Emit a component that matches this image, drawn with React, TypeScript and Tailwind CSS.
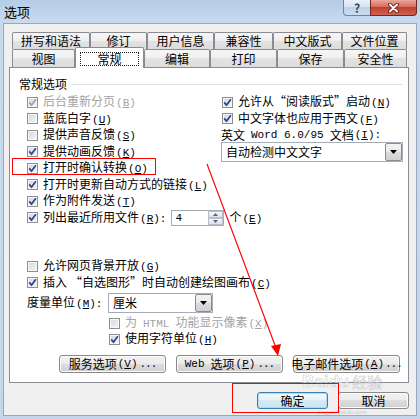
import type { ReactNode } from 'react';

const cjk = "font-['Noto_Sans_CJK_SC',sans-serif]";
const mono = "font-['Liberation_Mono',monospace] text-[11px]";
const dots = "font-['Liberation_Mono',monospace] text-[11px] tracking-[-1px]";
const btnFace = 'bg-[linear-gradient(#f2f2f2,#ebebeb_50%,#dddddd_50%,#cfcfcf)]';

// mnemonic like (B) with underlined letter, SimSun-style half width
function K({ k, colon }: { k: string; colon?: boolean }) {
  return (
    <span className={`${mono} ml-[1px]`}>
      (<span className="underline underline-offset-[1px]">{k}</span>){colon ? ':' : ''}
    </span>
  );
}

function Box({ on, off }: { on?: boolean; off?: boolean }) {
  return (
    <span className="flex h-[11px] w-[11px] shrink-0 items-center justify-center border border-[#8e8f8f] bg-[linear-gradient(135deg,#d3d7dd,#f5f5f5)] shadow-[inset_0_0_0_1px_#f7f7f7]">
      {on && (
        <svg width="9" height="9" viewBox="0 0 9 9" className="overflow-visible">
          <path d="M1.2 4.4 L3.5 7.1 L7.9 1.2" fill="none" stroke={off ? '#a2a2a2' : '#2c4690'} strokeWidth="1.7" />
        </svg>
      )}
    </span>
  );
}

function Check({ on, off, children, className = '' }: { on?: boolean; off?: boolean; children: ReactNode; className?: string }) {
  return (
    <div className={`flex h-[16.5px] items-center gap-[5px] ${className}`}>
      <Box on={on} off={off} />
      <span className={`whitespace-nowrap leading-[14px] ${off ? 'text-[#a3a3a3]' : 'text-black'}`}>{children}</span>
    </div>
  );
}

function Combo({ value, className = '' }: { value: string; className?: string }) {
  return (
    <div className={`flex h-[20px] items-center border border-[#a5acb5] bg-white pl-[4px] ${className}`}>
      <span className="flex-1 whitespace-nowrap leading-[14px]">{value}</span>
      <span className={`flex h-[18px] w-[17px] items-center justify-center rounded-[2px] border border-[#8c8c8c] ${btnFace}`}>
        <svg width="7" height="4" viewBox="0 0 7 4">
          <path d="M0 0h7L3.5 4z" fill="#000" />
        </svg>
      </span>
    </div>
  );
}

function Btn({ children, className = '', focus }: { children: ReactNode; className?: string; focus?: boolean }) {
  return (
    <div
      className={`flex items-center justify-center whitespace-nowrap rounded-[3px] border leading-[14px] ${
        focus ? 'border-[#3c7fb1] shadow-[inset_0_0_0_1px_#a9dcf6] bg-[linear-gradient(#f4f9fc,#e6f2f9_50%,#d6e9f4_50%,#cbe3f1)]' : `border-[#8a8a8a] shadow-[inset_0_0_0_1px_#fbfbfb] ${btnFace}`
      } ${className}`}
    >
      {children}
    </div>
  );
}

const tabFace = 'bg-[linear-gradient(#f6f6f6,#efefef_50%,#e3e3e3_50%,#dcdcdc)]';

function Tab({ w, label }: { w: string; label: string }) {
  return (
    <div className={`${w} flex h-full items-center justify-center rounded-t-[2px] border-x border-t border-[#898c95] ${tabFace} leading-[14px]`}>
      {label}
    </div>
  );
}

export default function App() {
  return (
    <div className={`relative h-[419px] w-[420px] overflow-hidden bg-[linear-gradient(to_bottom,#b4cce8,#c8daef_22px,#c3d6ec)] text-[12px] text-black ${cjk}`}>
      {/* title bar */}
      <div className="flex h-[23px] items-start justify-between">
        <span className="pl-[4px] pt-[4px] text-[13px] leading-[15px]">选项</span>
        <div className="mr-[3px] flex">
          <div className="flex h-[16px] w-[27px] items-center justify-center rounded-bl-[4px] border-b border-l border-[#6f84a2] bg-[linear-gradient(#e9f0f8,#d6e3f1_45%,#bed1e7_50%,#cadcef)] text-[12px] font-bold leading-[12px] text-[#34465f]">
            ?
          </div>
          <div className="flex h-[16px] w-[47px] items-center justify-center rounded-br-[4px] border-x border-b border-[#6e2a22] bg-[linear-gradient(#e9a89c,#d76c5c_45%,#c23f2f_50%,#cf6150)]">
            <svg width="11" height="10" viewBox="0 0 11 10">
              <path d="M1.8 1.5 L9.2 8.5 M9.2 1.5 L1.8 8.5" stroke="#5e1d15" strokeWidth="3.6" strokeLinecap="round" />
              <path d="M1.8 1.5 L9.2 8.5 M9.2 1.5 L1.8 8.5" stroke="#ffffff" strokeWidth="1.8" strokeLinecap="round" />
            </svg>
          </div>
        </div>
      </div>

      {/* dialog body */}
      <div className="mx-[3px] h-[393px] border border-[#95a8c1] bg-[#f0f0f0]">
        {/* tab strip */}
        <div className="ml-[8px] mt-[8px] w-[395px]">
          <div className="flex h-[17px]">
            <Tab w="w-[78px]" label="拼写和语法" />
            <Tab w="w-[57px]" label="修订" />
            <Tab w="w-[67px]" label="用户信息" />
            <Tab w="w-[59px]" label="兼容性" />
            <Tab w="w-[69px]" label="中文版式" />
            <Tab w="w-[65px]" label="文件位置" />
          </div>
          <div className="flex h-[18px] items-end">
            <Tab w="w-[63px]" label="视图" />
            <div className="relative z-10 -mb-px flex h-[21px] w-[69px] shrink-0 items-center justify-center rounded-t-[2px] border-x border-t border-[#898c95] bg-white pt-[1px]">
              <span className="flex h-[14px] w-[59px] items-center justify-center border border-dotted border-[#222] leading-[14px]">常规</span>
            </div>
            <Tab w="w-[66px]" label="编辑" />
            <Tab w="w-[67px]" label="打印" />
            <Tab w="w-[67px]" label="保存" />
            <Tab w="w-[63px]" label="安全性" />
          </div>
        </div>

        {/* tab page */}
        <div className="ml-[5px] h-[316px] w-[400px] border border-[#898c95] bg-white pt-[9px]">
          <div className="flex h-[14px] items-center pl-[9px] pr-[6px]">
            <span className="leading-[14px]">常规选项</span>
            <span className="ml-[4px] h-px flex-1 bg-[#d5dfe5]" />
          </div>

          <div className="mt-[3px] flex pl-[17px]">
            <div className="w-[194px]">
              <Check on off>
                后台重新分页<K k="B" />
              </Check>
              <Check>
                蓝底白字<K k="U" />
              </Check>
              <Check>
                提供声音反馈<K k="S" />
              </Check>
              <Check on>
                提供动画反馈<K k="K" />
              </Check>
              <Check on>
                打开时确认转换<K k="O" />
              </Check>
              <Check on>
                打开时更新自动方式的链接<K k="L" />
              </Check>
              <Check on>
                作为附件发送<K k="T" />
              </Check>
              <div className="flex h-[16.5px] items-center gap-[5px]">
                <Box on />
                <span className="whitespace-nowrap leading-[14px]">
                  列出最近所用文件<K k="R" colon />
                </span>
                <div className="flex h-[16px] w-[53px] shrink-0 border border-[#a5acb5] bg-white">
                  <span className={`flex-1 pl-[3px] leading-[14px] ${mono}`}>4</span>
                  <span className="flex w-[15px] flex-col">
                    <span className="flex flex-1 items-center justify-center border border-[#b9bfc8] bg-[linear-gradient(#f5f5f5,#dde2e8)]">
                      <svg width="5" height="3" viewBox="0 0 5 3">
                        <path d="M0 3h5L2.5 0z" fill="#4b6590" />
                      </svg>
                    </span>
                    <span className="flex flex-1 items-center justify-center border border-[#b9bfc8] bg-[linear-gradient(#f5f5f5,#dde2e8)]">
                      <svg width="5" height="3" viewBox="0 0 5 3">
                        <path d="M0 0h5L2.5 3z" fill="#4b6590" />
                      </svg>
                    </span>
                  </span>
                </div>
                <span className="whitespace-nowrap leading-[14px]">
                  个<K k="E" />
                </span>
              </div>
            </div>

            <div className="flex-1">
              <Check on className="ml-[1px]">
                允许从“阅读版式”启动<K k="N" />
              </Check>
              <Check on className="ml-[1px]">
                中文字体也应用于西文<K k="F" />
              </Check>
              <div className="flex h-[15px] items-center whitespace-nowrap leading-[14px]">
                英文<span className={`${mono} mx-[6px]`}>Word 6.0/95</span>文档<K k="I" colon />
              </div>
              <Combo value="自动检测中文文字" className="w-[182px]" />
            </div>
          </div>

          <div className="mt-[32px] pl-[17px]">
            <Check>
              允许网页背景开放<K k="G" />
            </Check>
            <Check on>
              插入<span className="ml-[3px]">“自选图形”</span>时自动创建绘图画布<K k="C" />
            </Check>
            <div className="mt-[2px] flex items-center">
              <span className="w-[81px] whitespace-nowrap leading-[14px]">
                度量单位<K k="M" colon />
              </span>
              <Combo value="厘米" className="w-[105px]" />
            </div>
            <div className="mt-[2px] pl-[82px]">
              <Check off className="h-[16px]">
                为<span className={`${mono} mx-[6px]`}>HTML</span>功能显示像素<K k="X" />
              </Check>
              <Check on className="h-[16px]">
                使用字符单位<K k="H" />
              </Check>
            </div>
            <div className="ml-[32px] mt-[8px] flex gap-[10px]">
              <Btn className="h-[18px] w-[107px]">
                服务选项<K k="V" />
                <span className={`${dots} ml-[2px]`}>...</span>
              </Btn>
              <Btn className="h-[18px] w-[107px]">
                <span className={`${mono} mr-[6px]`}>Web</span>选项<K k="P" />
                <span className={`${dots} ml-[2px]`}>...</span>
              </Btn>
              <Btn className="h-[18px] w-[107px]">
                电子邮件选项<K k="A" />
                <span className={`${dots} ml-[1px]`}>...</span>
              </Btn>
            </div>
          </div>
        </div>

        {/* dialog buttons */}
        <div className="ml-[5px] mt-[9px] flex w-[400px] justify-end gap-[10px]">
          <Btn focus className="h-[17px] w-[71px]">
            确定
          </Btn>
          <Btn className="h-[17px] w-[71px]">取消</Btn>
        </div>
      </div>

      {/* watermark */}
      <div className="pointer-events-none absolute left-[302px] top-[373px] flex h-[17px] items-center leading-none text-white/50 [-webkit-text-stroke:0.6px_#cfcfcf]">
        <span className="font-['Liberation_Sans',sans-serif] text-[17px] font-bold">Baidu</span>
        <span className="ml-[3px] text-[15px]">经验</span>
      </div>
      <div className="pointer-events-none absolute left-[318px] top-[409px] font-['Liberation_Sans',sans-serif] text-[6px] leading-[6px] text-[#c9c9c9]">
        jingyan.baidu.com
      </div>

      {/* red annotations */}
      <svg className="pointer-events-none absolute inset-0" width="420" height="419" viewBox="0 0 420 419">
        <rect x="12.5" y="158.5" width="143" height="16" fill="none" stroke="#ff0000" strokeWidth="1" />
        <rect x="232.5" y="383.5" width="106" height="29" fill="none" stroke="#ff0000" strokeWidth="1" />
        <line x1="207" y1="164" x2="276" y2="348" stroke="#ff0000" strokeWidth="1.2" />
        <polygon points="278,356 271,346 281,344" fill="#ff0000" />
      </svg>
    </div>
  );
}
